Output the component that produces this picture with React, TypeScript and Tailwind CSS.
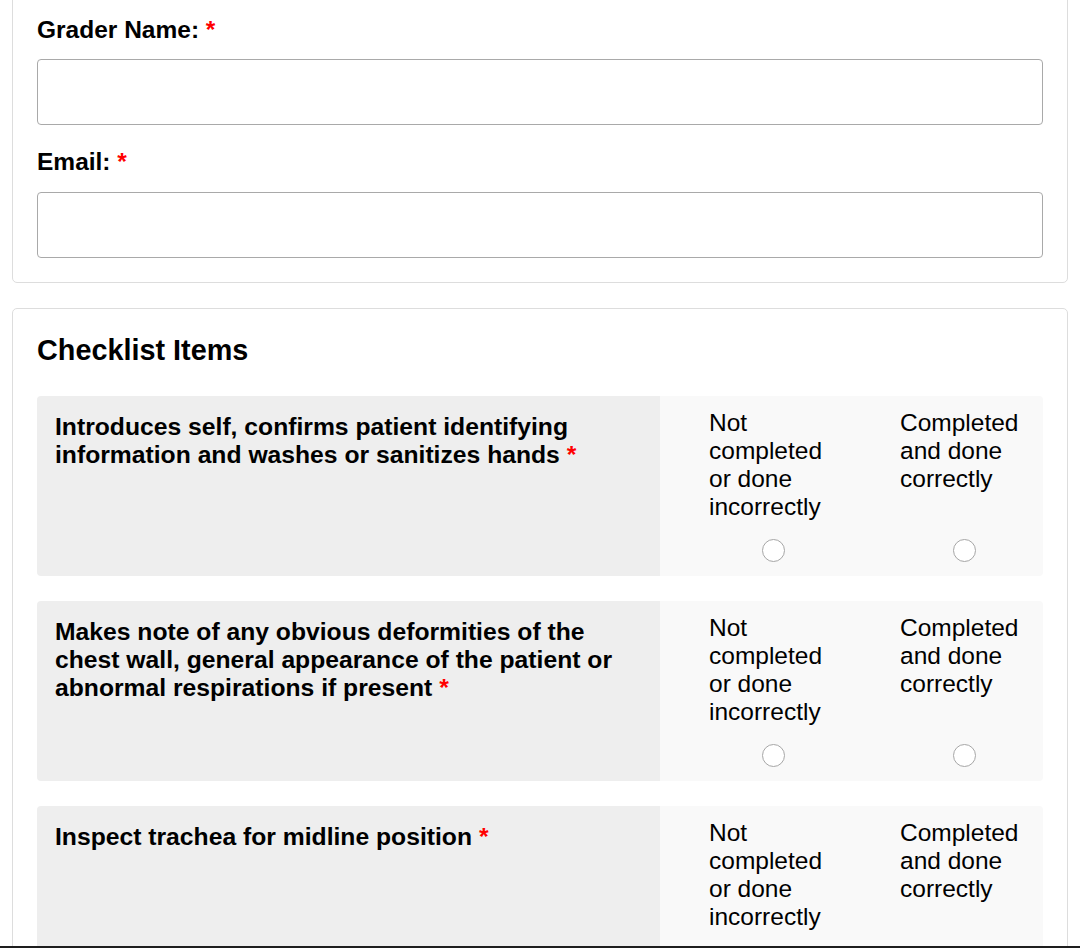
import React from "react";

const items = [
  "Introduces self, confirms patient identifying information and washes or sanitizes hands",
  "Makes note of any obvious deformities of the chest wall, general appearance of the patient or abnormal respirations if present",
  "Inspect trachea for midline position",
];

function Radio() {
  return (
    <span className="block w-[23px] h-[23px] rounded-full border-[1.5px] border-[#a6a6a6] bg-white" />
  );
}

function Row({ text }: { text: string }) {
  return (
    <div className="flex rounded-[4px] overflow-hidden">
      <div className="w-[623px] bg-[#eeeeee] pl-[18px] pr-[18px] pt-[17px] font-bold text-[24.7px] leading-[28px]">
        {text} <span className="text-[#ff0000]">*</span>
      </div>
      <div className="flex-1 bg-[#f9f9f9] pl-[49px] pt-[13px] pb-[14px] flex gap-[63px] text-[24.5px] leading-[28px]">
        <div className="w-[128px] flex flex-col">
          <div className="h-[112px]">Not completed or done incorrectly</div>
          <div className="mt-[18px] flex justify-center">
            <Radio />
          </div>
        </div>
        <div className="w-[128px] flex flex-col">
          <div className="h-[112px]">Completed and done correctly</div>
          <div className="mt-[18px] flex justify-center">
            <Radio />
          </div>
        </div>
      </div>
    </div>
  );
}

export default function App() {
  return (
    <div
      className="h-[948px] flex flex-col bg-white text-black overflow-hidden"
      style={{ fontFamily: '"Liberation Sans", Arial, sans-serif' }}
    >
      <div className="flex-1 overflow-hidden">
        <div className="mx-[12px] mt-[-9px] border border-[#dddddd] rounded-[5px] px-[24px] pt-[24px] pb-[24px]">
          <div className="font-bold text-[24.5px] leading-[28px]">
            Grader Name: <span className="text-[#ff0000]">*</span>
          </div>
          <div className="mt-[15px] h-[66px] border border-[#a9a9a9] rounded-[4px] bg-white" />
          <div className="mt-[23px] font-bold text-[24.5px] leading-[28px]">
            Email: <span className="text-[#ff0000]">*</span>
          </div>
          <div className="mt-[16px] h-[66px] border border-[#a9a9a9] rounded-[4px] bg-white" />
        </div>
        <div className="mx-[12px] mt-[25px] border border-[#dddddd] rounded-[5px] px-[24px] pt-[24px] pb-[24px]">
          <div className="font-bold text-[28.8px] leading-[34px]">Checklist Items</div>
          <div className="mt-[29px] flex flex-col gap-[25px]">
            {items.map((t) => (
              <Row key={t} text={t} />
            ))}
          </div>
        </div>
      </div>
      <div className="h-[2px] bg-[#1e1e1e]" />
    </div>
  );
}
